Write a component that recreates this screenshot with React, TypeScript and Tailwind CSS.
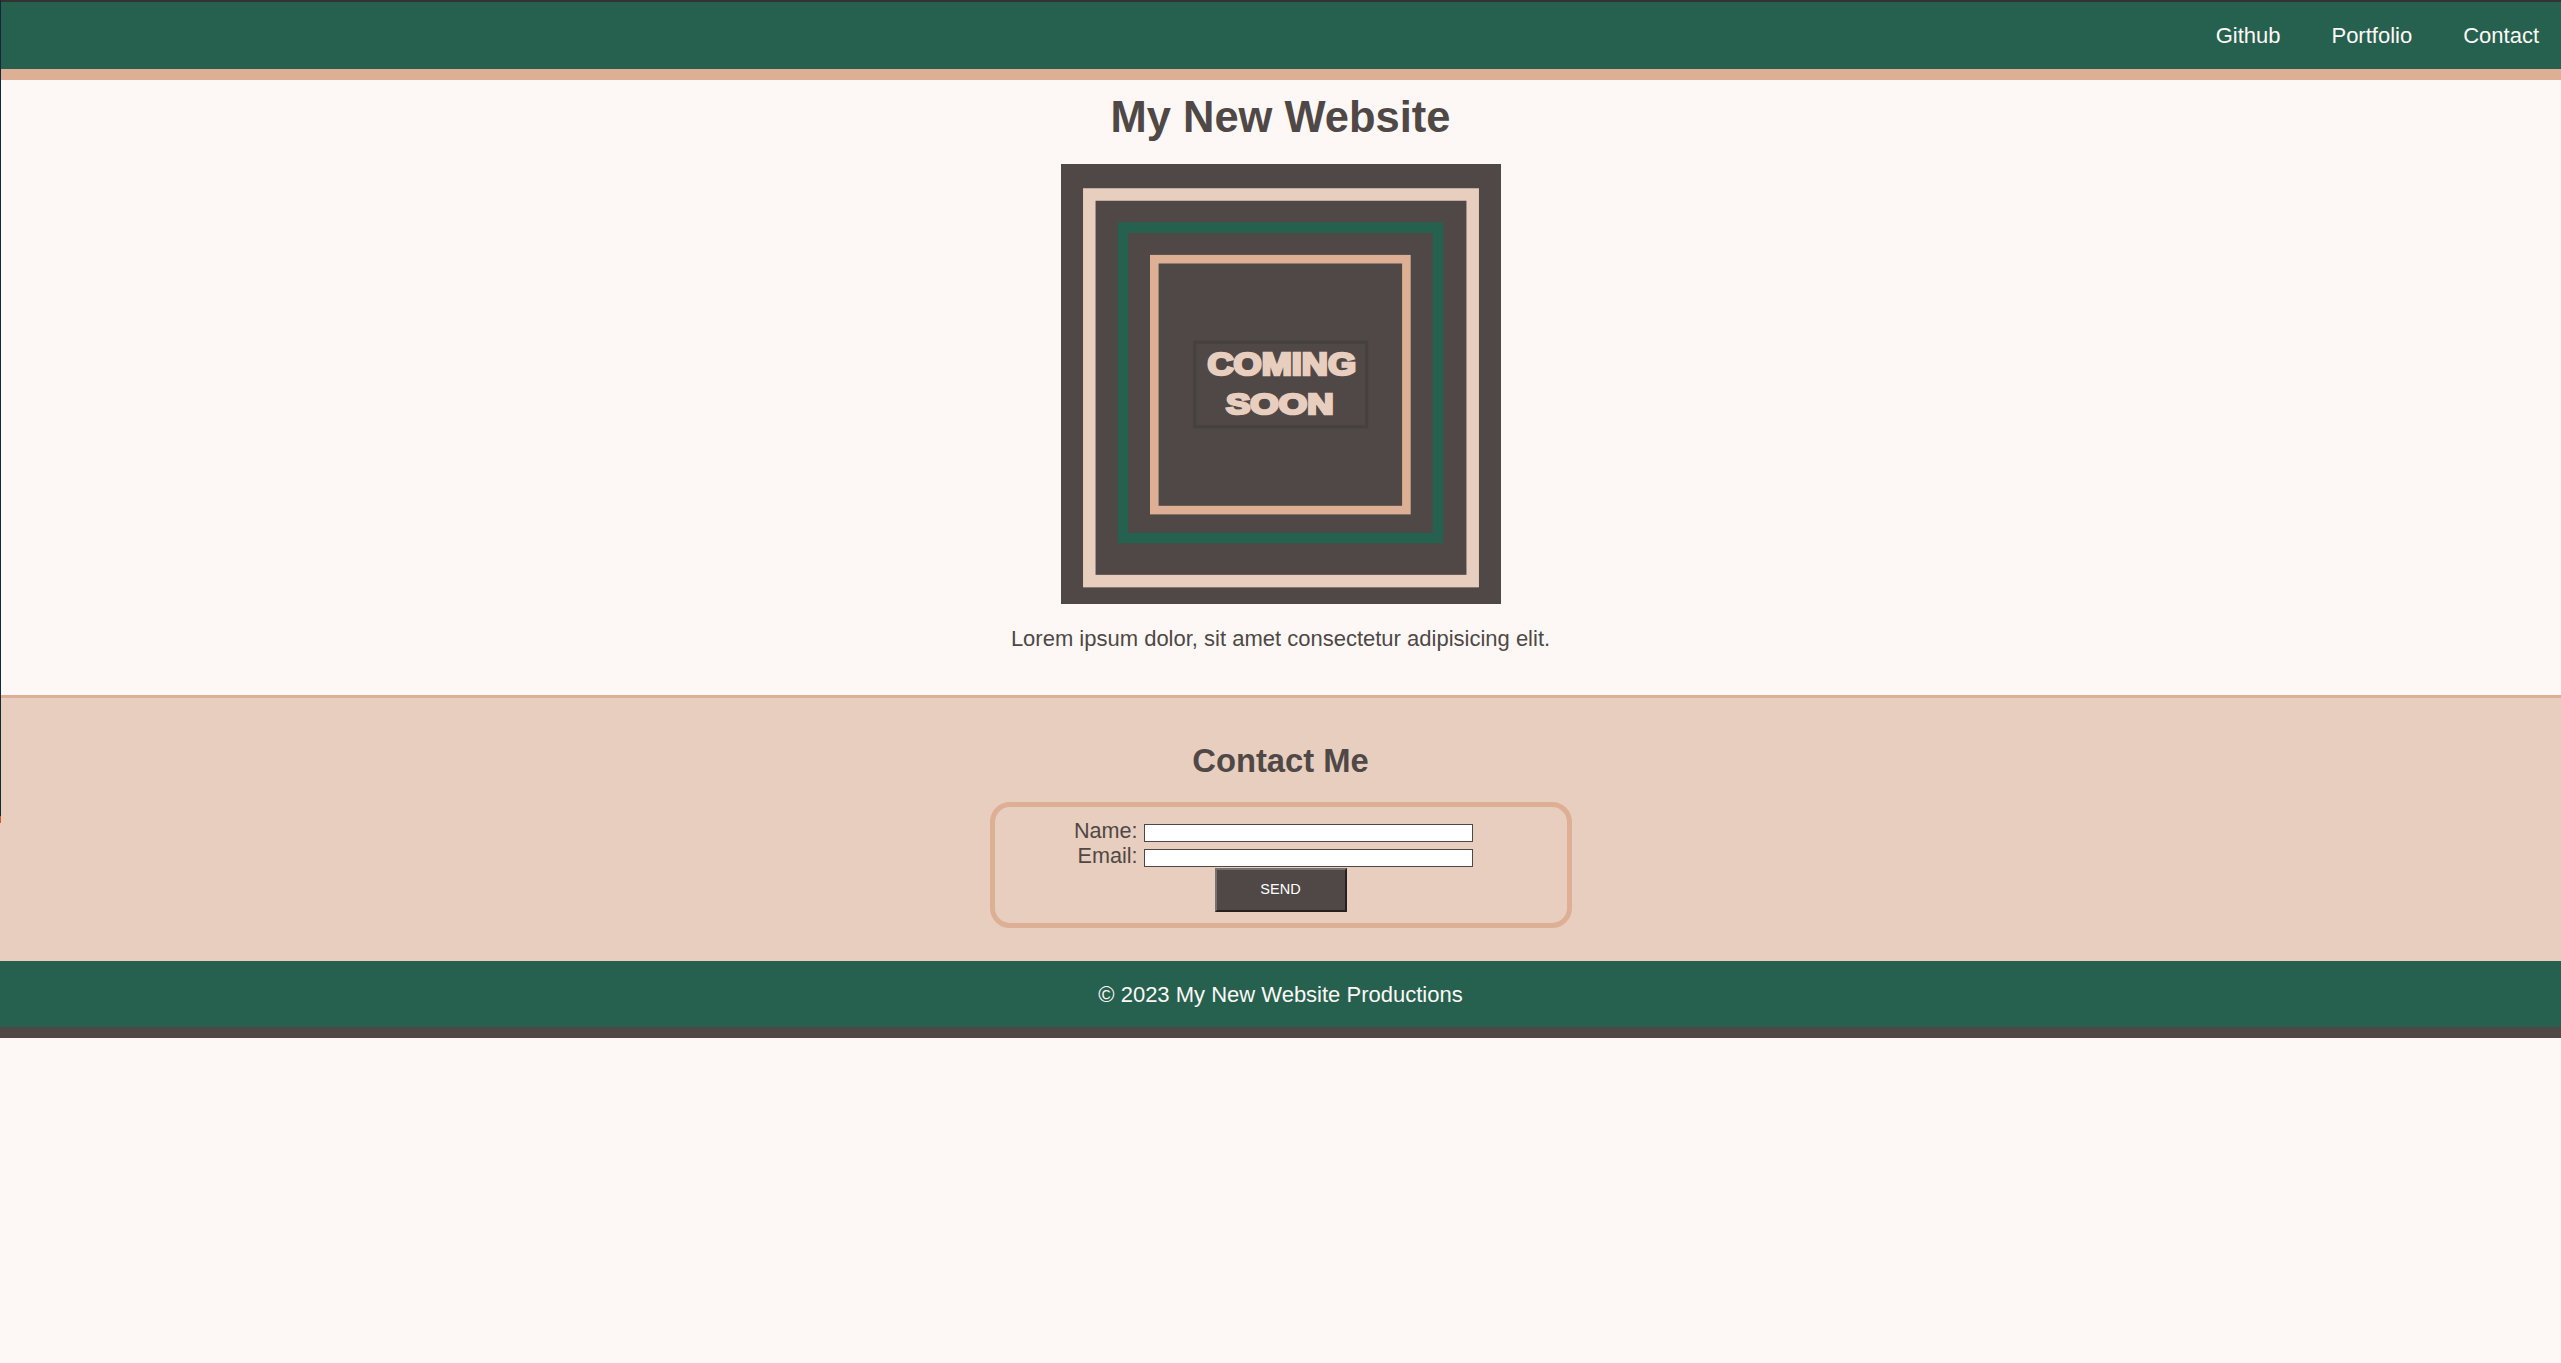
/**
 * My New Website - landing page
 * Nav, coming-soon banner, contact form and footer
 */

const navLinks = ['Github', 'Portfolio', 'Contact'];

function ComingSoon() {
  return (
    <svg width="440" height="440" viewBox="0 0 440 440" className="block">
      <rect x="0" y="0" width="440" height="440" fill="#4F4846" />
      {/* outer light frame */}
      <rect x="28.3" y="30.5" width="383.4" height="386.6" fill="none" stroke="#E8CEBF" strokeWidth="12.5" />
      {/* green frame */}
      <rect x="62" y="63.6" width="315" height="310.4" fill="none" stroke="#266150" strokeWidth="10.7" />
      {/* peach frame */}
      <rect x="93.3" y="95.2" width="252.1" height="250.9" fill="none" stroke="#DDAF94" strokeWidth="8.6" />
      {/* text plate */}
      <rect x="133.8" y="178.2" width="172" height="84.6" fill="#4F4846" stroke="#45413F" strokeWidth="3" />
      <text
        x="146.5"
        y="211"
        textLength="148.5"
        lengthAdjust="spacingAndGlyphs"
        fontFamily="'Liberation Sans', Arial, sans-serif"
        fontWeight="900"
        fontSize="30.5"
        fill="#E8CEBF"
        stroke="#E8CEBF"
        strokeWidth="2.6"
        paintOrder="stroke"
      >
        COMING
      </text>
      <text
        x="165"
        y="250"
        textLength="107.5"
        lengthAdjust="spacingAndGlyphs"
        fontFamily="'Liberation Sans', Arial, sans-serif"
        fontWeight="900"
        fontSize="29"
        fill="#E8CEBF"
        stroke="#E8CEBF"
        strokeWidth="2.6"
        paintOrder="stroke"
      >
        SOON
      </text>
    </svg>
  );
}

export default function App() {
  return (
    <div className="relative min-h-screen bg-[#FDF8F5] font-['Liberation_Sans',Arial,sans-serif] text-[#4F4846]">
      {/* window edge artefacts */}
      <div className="absolute left-0 top-0 h-[816px] w-px bg-[#14283A]" />
      <div className="absolute left-0 top-[816px] h-[7px] w-px bg-[#D35A1F]" />

      {/* Header */}
      <div className="h-[2px] bg-[#333333]" />
      <nav className="flex h-[67px] items-center justify-end gap-[51px] bg-[#266150] pr-[22px] text-[22px] leading-[25px] text-[#FDF8F5]">
        {navLinks.map((link) => (
          <a key={link} href="#">
            {link}
          </a>
        ))}
      </nav>
      <div className="h-[11px] bg-[#DDAF94]" />

      {/* Main */}
      <main className="flex flex-col items-center">
        <h1 className="mt-[12px] text-[43.5px] font-bold leading-[50px]">My New Website</h1>
        <div className="mt-[22px]">
          <ComingSoon />
        </div>
        <p className="mb-[44px] mt-[22px] text-[22px] leading-[25px]">
          Lorem ipsum dolor, sit amet consectetur adipisicing elit.
        </p>
      </main>

      {/* Contact */}
      <section className="flex flex-col items-center border-t-[3px] border-[#DDAF94] bg-[#E8CEBF] pb-[33px] pt-[44px]">
        <h2 className="text-[32.75px] font-bold leading-[38px]">Contact Me</h2>
        <form className="mt-[22px] flex w-[582px] flex-col rounded-[20px] border-[5px] border-[#DDAF94] py-[11px]">
          <div className="grid grid-cols-[143px_329px] gap-x-[6px] text-[21.6px] leading-[25px]">
            <label className="text-right">Name:</label>
            <div className="h-[25px] pt-[6px]">
              <input type="text" className="block h-[18px] w-[329px] border-[1.5px] border-[#4F4846] bg-white" />
            </div>
            <label className="text-right">Email:</label>
            <div className="h-[25px] pt-[6px]">
              <input type="text" className="block h-[18px] w-[329px] border-[1.5px] border-[#4F4846] bg-white" />
            </div>
          </div>
          <button
            type="button"
            className="mx-auto flex h-[44px] w-[132px] items-center justify-center border-2 border-b-[#242120] border-l-[#77716E] border-r-[#242120] border-t-[#77716E] bg-[#4F4846] text-[14.5px] text-white"
          >
            SEND
          </button>
        </form>
      </section>

      {/* Footer */}
      <footer className="flex h-[66px] items-center justify-center bg-[#266150] text-[22px] leading-[25px] text-[#FDF8F5]">
        © 2023 My New Website Productions
      </footer>
      <div className="h-[11px] bg-[#4F4846]" />
    </div>
  );
}
